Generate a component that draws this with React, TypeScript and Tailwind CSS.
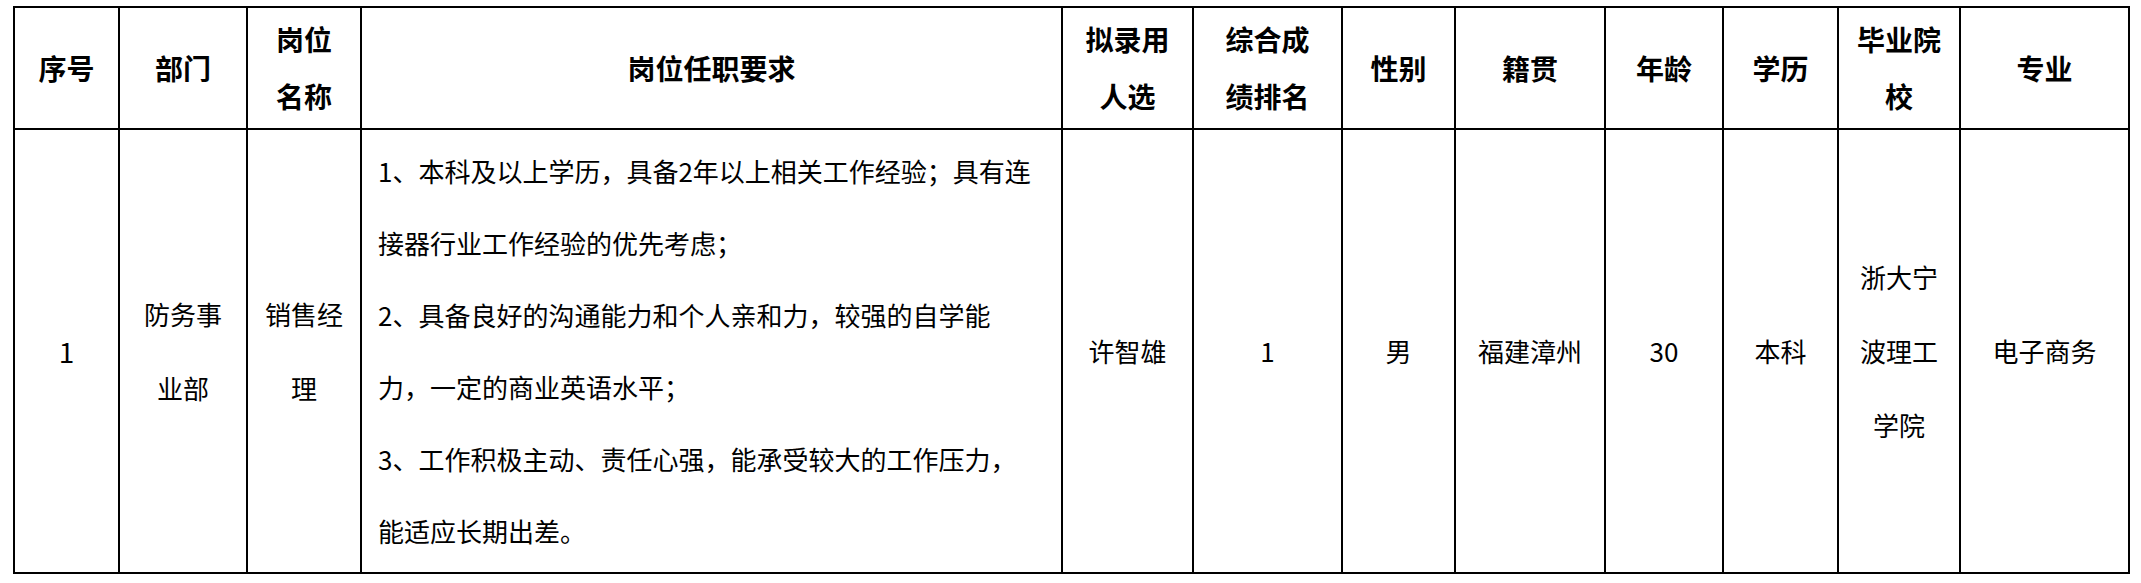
const font = {
  fontFamily: '"Noto Sans CJK SC", "Noto Sans", sans-serif',
};

// column widths measured between the grid lines
const columns = [105, 128, 114, 701, 131, 149, 113, 150, 118, 115, 122, 169];

const headers: string[][] = [
  ["序号"],
  ["部门"],
  ["岗位", "名称"],
  ["岗位任职要求"],
  ["拟录用", "人选"],
  ["综合成", "绩排名"],
  ["性别"],
  ["籍贯"],
  ["年龄"],
  ["学历"],
  ["毕业院", "校"],
  ["专业"],
];

const requirements = [
  "1、本科及以上学历，具备2年以上相关工作经验；具有连",
  "接器行业工作经验的优先考虑；",
  "2、具备良好的沟通能力和个人亲和力，较强的自学能",
  "力，一定的商业英语水平；",
  "3、工作积极主动、责任心强，能承受较大的工作压力，",
  "能适应长期出差。",
];

const row: (string[] | null)[] = [
  ["1"],
  ["防务事", "业部"],
  ["销售经", "理"],
  null,
  ["许智雄"],
  ["1"],
  ["男"],
  ["福建漳州"],
  ["30"],
  ["本科"],
  ["浙大宁", "波理工", "学院"],
  ["电子商务"],
];

function Lines({ lines }: { lines: string[] }) {
  return (
    <div className="flex flex-col items-center">
      {lines.map((l) => (
        <div key={l} className="whitespace-nowrap leading-[74px]">
          {l}
        </div>
      ))}
    </div>
  );
}

export default function App() {
  return (
    <div className="min-h-[583px] w-[2141px] bg-white pl-[13px] pt-[6px] text-black" style={font}>
      <table className="w-[2117px] table-fixed border-collapse border-2 border-black">
        <colgroup>
          {columns.map((w, i) => (
            <col key={i} style={{ width: w }} />
          ))}
        </colgroup>
        <thead>
          <tr className="h-[122px]">
            {headers.map((lines, i) => (
              <th
                key={i}
                className="border-2 border-black p-0 text-center align-middle text-[28px] font-bold"
              >
                <div className="flex flex-col items-center">
                  {lines.map((l) => (
                    <div key={l} className="whitespace-nowrap leading-[57px]">
                      {l}
                    </div>
                  ))}
                </div>
              </th>
            ))}
          </tr>
        </thead>
        <tbody>
          <tr className="h-[444px]">
            {row.map((cell, i) => (
              <td
                key={i}
                className={
                  i === 0
                    ? "border-2 border-black p-0 text-center align-middle text-[28px] font-normal"
                    : "border-2 border-black p-0 text-center align-middle text-[26px] font-normal"
                }
              >
                {cell ? (
                  <Lines lines={cell} />
                ) : (
                  <div className="pl-4 text-left">
                    {requirements.map((l) => (
                      <div key={l} className="whitespace-nowrap leading-[72px]">
                        {l}
                      </div>
                    ))}
                  </div>
                )}
              </td>
            ))}
          </tr>
        </tbody>
      </table>
    </div>
  );
}
